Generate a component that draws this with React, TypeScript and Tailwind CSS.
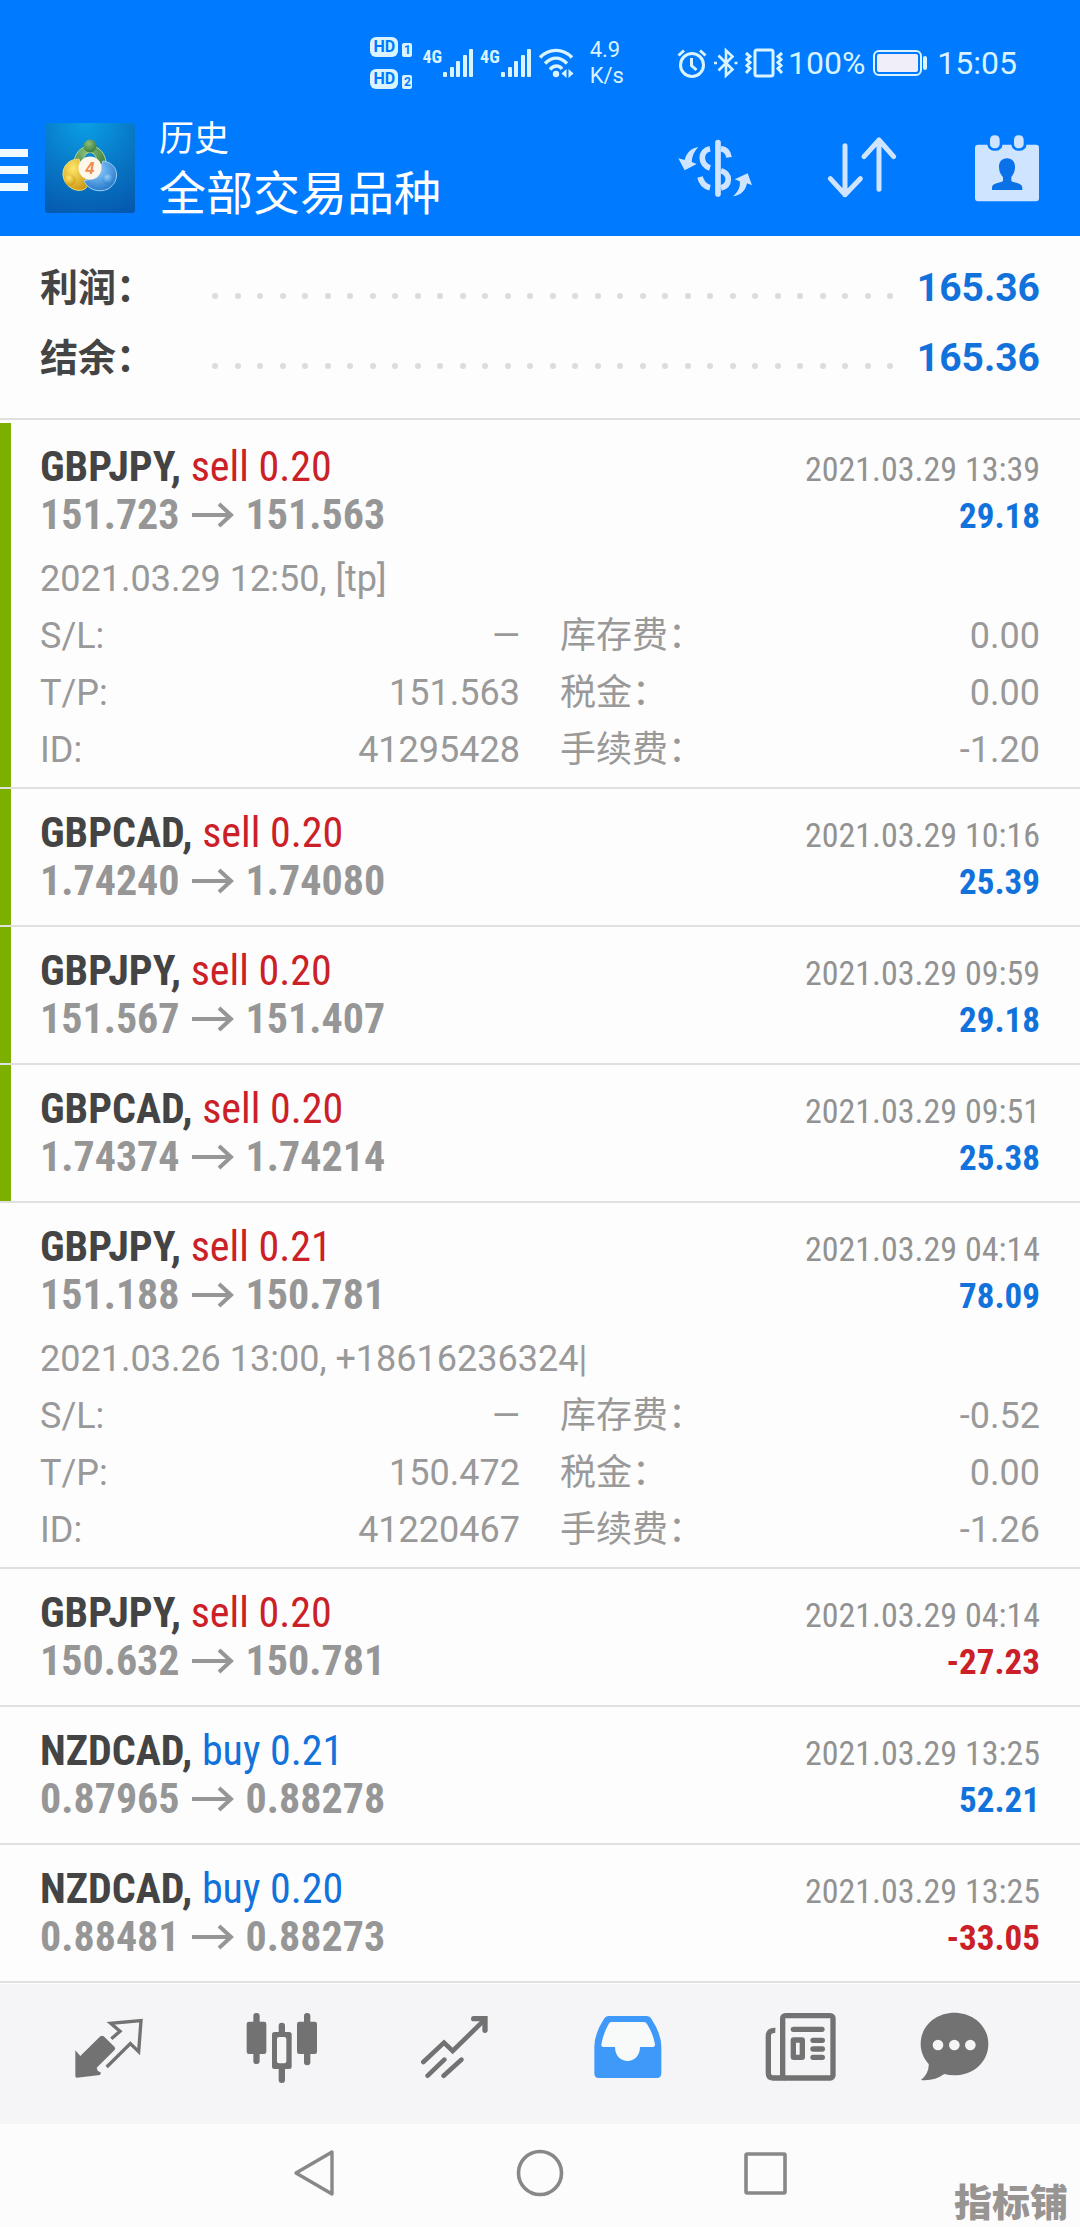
import type { ReactNode } from 'react'

type Trade = {
  symbol: string
  side: 'sell' | 'buy'
  volume: string
  open: string
  close: string
  time: string
  profit: string
  marked?: boolean
  details?: {
    note: string
    rows: [string, string, string, string][]
  }
}

const trades: Trade[] = [
  {
    symbol: 'GBPJPY',
    side: 'sell',
    volume: '0.20',
    open: '151.723',
    close: '151.563',
    time: '2021.03.29 13:39',
    profit: '29.18',
    marked: true,
    details: {
      note: '2021.03.29 12:50, [tp]',
      rows: [
        ['S/L:', '—', '库存费：', '0.00'],
        ['T/P:', '151.563', '税金：', '0.00'],
        ['ID:', '41295428', '手续费：', '-1.20'],
      ],
    },
  },
  {
    symbol: 'GBPCAD',
    side: 'sell',
    volume: '0.20',
    open: '1.74240',
    close: '1.74080',
    time: '2021.03.29 10:16',
    profit: '25.39',
    marked: true,
  },
  {
    symbol: 'GBPJPY',
    side: 'sell',
    volume: '0.20',
    open: '151.567',
    close: '151.407',
    time: '2021.03.29 09:59',
    profit: '29.18',
    marked: true,
  },
  {
    symbol: 'GBPCAD',
    side: 'sell',
    volume: '0.20',
    open: '1.74374',
    close: '1.74214',
    time: '2021.03.29 09:51',
    profit: '25.38',
    marked: true,
  },
  {
    symbol: 'GBPJPY',
    side: 'sell',
    volume: '0.21',
    open: '151.188',
    close: '150.781',
    time: '2021.03.29 04:14',
    profit: '78.09',
    details: {
      note: '2021.03.26 13:00, +18616236324|',
      rows: [
        ['S/L:', '—', '库存费：', '-0.52'],
        ['T/P:', '150.472', '税金：', '0.00'],
        ['ID:', '41220467', '手续费：', '-1.26'],
      ],
    },
  },
  {
    symbol: 'GBPJPY',
    side: 'sell',
    volume: '0.20',
    open: '150.632',
    close: '150.781',
    time: '2021.03.29 04:14',
    profit: '-27.23',
  },
  {
    symbol: 'NZDCAD',
    side: 'buy',
    volume: '0.21',
    open: '0.87965',
    close: '0.88278',
    time: '2021.03.29 13:25',
    profit: '52.21',
  },
  {
    symbol: 'NZDCAD',
    side: 'buy',
    volume: '0.20',
    open: '0.88481',
    close: '0.88273',
    time: '2021.03.29 13:25',
    profit: '-33.05',
  },
]

const HdBadge = ({ sim }: { sim: string }) => (
  <div className="flex items-end gap-1 font-bold text-[#007aff]">
    <span className="flex h-5 w-7 items-center justify-center rounded-md bg-[#d9f3ff] text-base leading-none">
      HD
    </span>
    <span className="flex h-[14px] w-[10px] items-center justify-center rounded-xs bg-[#d9f3ff] text-xs leading-none">
      {sim}
    </span>
  </div>
)

const Signal = () => (
  <div className="flex items-start">
    <span className="font-['Roboto_Condensed','Liberation_Sans_Narrow',sans-serif] text-lg leading-4 font-bold">
      4G
    </span>
    <svg className="h-7 w-8" viewBox="0 0 32 28" fill="currentColor">
      <rect x="1" y="23" width="4" height="5" rx="1" />
      <rect x="8" y="18" width="4" height="10" rx="1" />
      <rect x="14" y="12" width="4" height="16" rx="1" />
      <rect x="21" y="6" width="4" height="22" rx="1" />
      <rect x="27" y="0" width="4" height="28" rx="1" />
    </svg>
  </div>
)

const StatusBar = () => (
  <div className="flex h-[110px] items-center justify-end pt-4 pr-[63px] text-[#d9f3ff]">
    <div className="flex flex-col gap-3">
      <HdBadge sim="1" />
      <HdBadge sim="2" />
    </div>
    <div className="ml-[10px] flex items-center gap-[6px]">
      <Signal />
      <Signal />
      <svg className="h-8 w-9" viewBox="0 0 36 32" fill="none" stroke="currentColor" strokeWidth="3.4">
        <path d="M2 10.500C11 1 25 1 34 10.500M7 16.500C14 9.500 22 9.500 29 16.500M12 22.500C16 18 21 18 24 22" />
        <circle cx="18" cy="27" r="3.200" fill="currentColor" stroke="none" />
        <path d="M28.500 22v9l-5-4.500zM30.500 22v9l5-4.500z" fill="currentColor" stroke="none" />
      </svg>
    </div>
    <div className="ml-4 text-[22px] leading-[26px]">
      <div>4.9</div>
      <div>K/s</div>
    </div>
    <div className="ml-[52px] flex items-center gap-[6px]">
      <svg className="h-8 w-8" viewBox="0 0 32 32" fill="none" stroke="currentColor" strokeWidth="3">
        <circle cx="16" cy="18" r="11.500" />
        <path d="M15.500 11v7.500l5 4.500M2.500 8.500L8 3.500M29.500 8.500L24 3.500" />
      </svg>
      <svg className="h-8 w-6" viewBox="0 0 24 32" fill="none" stroke="currentColor" strokeWidth="2.600">
        <path d="M4.500 8.500L18.500 22.500L12 28.500V3.500L18.500 9.500L4.500 23.500" />
        <path d="M0 16h3M20.500 16h3" />
      </svg>
      <svg className="h-8 w-10" viewBox="0 0 40 32" fill="none" stroke="currentColor">
        <rect x="11" y="3" width="18" height="26" rx="2" strokeWidth="3" />
        <path
          d="M2 6l4 3.500l-3 3l3 3l-3 3l3 3l-4 4.500M38 6l-4 3.500l3 3l-3 3l3 3l-3 3l4 4.500"
          strokeWidth="3"
        />
      </svg>
    </div>
    <div className="ml-1 flex items-center gap-2 text-[32px] leading-9">
      <span>100%</span>
      <svg className="h-7 w-14" viewBox="0 0 56 28">
        <rect x="1" y="2" width="47" height="24" rx="5" fill="none" stroke="currentColor" strokeWidth="2" />
        <rect x="4" y="5" width="41" height="18" rx="2" fill="#f0eff9" />
        <rect x="50" y="7" width="4" height="14" rx="2" fill="currentColor" />
      </svg>
      <span>15:05</span>
    </div>
  </div>
)

const AppLogo = () => (
  <svg className="size-[90px]" viewBox="0 0 90 90" aria-hidden="true">
    <defs>
      <radialGradient id="logo-bg" cx="0.45" cy="0" r="1.1">
        <stop offset="0" stopColor="#0a9fe6" />
        <stop offset="0.5" stopColor="#0878c6" />
        <stop offset="1" stopColor="#0558ae" />
      </radialGradient>
      <radialGradient id="logo-green" cx="0.4" cy="0.3" r="0.8">
        <stop offset="0" stopColor="#8cc07a" />
        <stop offset="1" stopColor="#2f7238" />
      </radialGradient>
      <radialGradient id="logo-gold" cx="0.4" cy="0.3" r="0.8">
        <stop offset="0" stopColor="#ffe76a" />
        <stop offset="1" stopColor="#c9930e" />
      </radialGradient>
      <radialGradient id="logo-blue" cx="0.4" cy="0.3" r="0.8">
        <stop offset="0" stopColor="#8fd0ff" />
        <stop offset="1" stopColor="#1c6fc4" />
      </radialGradient>
    </defs>
    <rect width="90" height="90" rx="3" fill="url(#logo-bg)" />
    <path d="M29 44C27 16 63 16 61 44L52 46C55 24 35 24 38 46z" fill="url(#logo-green)" stroke="#b8d68c" />
    <path d="M34 36C16 36 12 58 28 66C35 69 42 67 43 61L36 44z" fill="url(#logo-gold)" stroke="#f1dc72" />
    <path d="M58 38C74 40 76 58 63 66C54 70 43 67 39 58L52 54z" fill="url(#logo-blue)" stroke="#9fd3f5" />
    <circle cx="45" cy="23" r="6.500" fill="url(#logo-green)" />
    <circle cx="25" cy="57" r="5.500" fill="url(#logo-gold)" />
    <circle cx="63" cy="56" r="5.500" fill="url(#logo-blue)" />
    <circle cx="45" cy="45" r="11.500" fill="#fff6ec" />
    <text
      x="45"
      y="51"
      textAnchor="middle"
      fill="#f08a4b"
      className="font-['Liberation_Sans',sans-serif] text-base font-bold italic"
    >
      4
    </text>
  </svg>
)

const Header = () => (
  <header className="bg-[#007aff] pb-[10px] text-white">
    <StatusBar />
    <div className="flex items-center pr-10">
      <button aria-label="Menu" className="mt-1 flex w-7 flex-col gap-[9px]">
        <span className="h-2 w-full bg-[#f0faff]" />
        <span className="h-2 w-full bg-[#f0faff]" />
        <span className="h-2 w-full bg-[#f0faff]" />
      </button>
      <div className="ml-[17px]">
        <AppLogo />
      </div>
      <div className="ml-6 flex-1 pt-2">
        <div className="text-[35px] leading-[44px]">历史</div>
        <h1 className="text-[47px] leading-[64px]">全部交易品种</h1>
      </div>
      <div className="flex items-center text-[#cfe5ff]">
        <button aria-label="Symbols" className="mr-[73px]">
          <svg className="h-[60px] w-[76px]" viewBox="108 80 228 180" fill="none" stroke="currentColor">
            <path
              d="M207 112C176 118 176 160 207 170M177 197C181 214 190 225 207 229M240 112C254 114 262 123 264 138M240 178C270 188 268 222 240 230"
              strokeWidth="17"
            />
            <path d="M231 94V248" strokeWidth="17" strokeLinecap="round" />
            <path
              d="M172 107C150 111 136 125 131 146L112 141L131 177L167 158L152 152C153 134 160 120 172 107zM276 255C292 241 299 226 296 210L281 204L320 186L333 222L318 216C314 238 300 252 276 255z"
              fill="currentColor"
              stroke="none"
            />
          </svg>
        </button>
        <button aria-label="Sort" className="mr-[76px]">
          <svg
            className="h-16 w-[72px]"
            viewBox="554 80 216 192"
            fill="none"
            stroke="currentColor"
            strokeWidth="15"
            strokeLinecap="round"
            strokeLinejoin="round"
          >
            <path d="M611 109V256M567 208L611 256L657 208M713 240V92M668 142L713 92L757 142" />
          </svg>
        </button>
        <button aria-label="Period">
          <svg className="h-[68px] w-[66px]" viewBox="1002 70 198 204">
            <rect x="1005" y="102" width="192" height="170" rx="9" fill="currentColor" />
            <rect x="1042" y="66" width="46" height="54" rx="20" fill="#007aff" />
            <rect x="1114" y="66" width="46" height="54" rx="20" fill="#007aff" />
            <rect x="1050" y="74" width="29" height="39" rx="13" fill="currentColor" />
            <rect x="1122" y="74" width="29" height="39" rx="13" fill="currentColor" />
            <path
              d="M1101 143C1118 143 1126 155 1125 172C1124 186 1118 194 1114 199V211C1122 217 1147 216 1147 231V238H1056V231C1056 216 1081 217 1089 211V199C1084 194 1078 186 1077 172C1076 155 1084 143 1101 143z"
              fill="#0a72e8"
            />
          </svg>
        </button>
      </div>
    </div>
  </header>
)

const SummaryRow = ({ label, value }: { label: string; value: string }) => (
  <div className="flex h-[70px] items-center font-bold">
    <dt className="w-[172px] text-[38px] text-[#444]">{label}</dt>
    <dd className="flex flex-1 items-center text-[39px]">
      <span className="mt-4 flex flex-1 justify-between" aria-hidden="true">
        {Array.from({ length: 31 }, (_, i) => (
          <span key={i} className="size-[6px] rounded-full bg-[#dcdcdc]" />
        ))}
      </span>
      <span className="ml-[23px] text-[#1272dc]">{value}</span>
    </dd>
  </div>
)

const TradeItem = ({ trade }: { trade: Trade }) => {
  const { symbol, side, volume, open, close, time, profit, marked, details } = trade

  return (
    <li className="border-b-2 border-[#e0e0e0]">
      <div className={`border-l-[11px] pt-5 pr-10 pl-[29px] ${marked ? 'border-[#7bb000]' : 'border-transparent'}`}>
        <div className="flex justify-between pb-[17px] font-['Roboto_Condensed','Liberation_Sans_Narrow',sans-serif]">
          <div className="pb-[3px] text-[42px] leading-[48px]">
            <div className={side === 'sell' ? 'text-[#cb2027]' : 'text-[#1272dc]'}>
              <span className="font-bold text-[#444]">{symbol},</span> {side} {volume}
            </div>
            <div className="flex items-center font-bold text-[#969696]">
              {open}
              <svg className="mx-3 h-8 w-[42px]" viewBox="0 0 42 32" fill="none" stroke="currentColor" strokeWidth="4">
                <path d="M0 16H40M27 5L39 16L27 27" />
              </svg>
              {close}
            </div>
          </div>
          <div className="pt-[2px] text-right text-[34px] leading-[48px]">
            <div className="text-[#929292]">{time}</div>
            <div
              className={`text-[35px] font-bold ${profit.startsWith('-') ? 'text-[#cb2027]' : 'text-[#1272dc]'}`}
            >
              {profit}
            </div>
          </div>
        </div>

        {details && (
          <div className="-mt-2 pb-2 text-4xl leading-[57px] text-[#999]">
            <p>{details.note}</p>
            <table className="w-full table-fixed">
              <tbody>
                {details.rows.map(([label, value, feeLabel, fee]) => (
                  <tr key={label}>
                    <th className="w-[12%] text-left font-normal">{label}</th>
                    <td className="w-[36%] text-right">{value}</td>
                    <th className="w-[24%] pl-10 text-left font-normal">{feeLabel}</th>
                    <td className="text-right">{fee}</td>
                  </tr>
                ))}
              </tbody>
            </table>
          </div>
        )}
      </div>
    </li>
  )
}

const TabButton = ({ label, active, children }: { label: string; active?: boolean; children: ReactNode }) => (
  <button aria-label={label} className={`flex justify-center ${active ? 'text-[#3f99f9]' : 'text-[#727272]'}`}>
    {children}
  </button>
)

const TabBar = () => (
  <nav className="grid grid-cols-[173fr_173fr_173fr_173fr_173fr_135fr] bg-[#f5f5f7] pt-7 pr-[58px] pb-10 pl-[22px]">
    <TabButton label="Quotes">
      <svg className="size-[72px]" viewBox="99 126 216 216">
        <path
          d="M106 241L121 258L181 199Q186 195 191 199L224 231Q228 236 223 241L170 293L173 302L183 308L180 315L110 323Q106 323 106 318z"
          fill="currentColor"
        />
        <path
          d="M214 206L240 184L212 160L303 152L296 245L271 221L200 291"
          fill="none"
          stroke="currentColor"
          strokeWidth="10"
        />
      </svg>
    </TabButton>
    <TabButton label="Charts">
      <svg className="size-[72px]" viewBox="615 126 216 216" fill="currentColor">
        <rect x="617" y="155" width="59" height="97" rx="7" />
        <rect x="637" y="129" width="19" height="153" rx="9" />
        <rect x="768" y="155" width="60" height="97" rx="7" />
        <rect x="789" y="129" width="19" height="157" rx="9" />
        <rect x="713" y="158" width="19" height="181" rx="9" />
        <rect x="693" y="186" width="59" height="111" rx="7" />
        <rect x="708" y="201" width="28" height="79" rx="6" fill="#f5f5f7" />
      </svg>
    </TabButton>
    <TabButton label="Trade">
      <svg
        className="size-[72px]"
        viewBox="1134 126 216 216"
        fill="none"
        stroke="currentColor"
        strokeWidth="14"
        strokeLinecap="round"
      >
        <path d="M1147 276L1209 218L1235 243L1328 152M1160 317L1210 269M1208 317L1261 269" />
        <path d="M1298 146H1332V181" strokeWidth="16" />
      </svg>
    </TabButton>
    <TabButton label="History" active>
      <svg className="size-[72px]" viewBox="153 126 216 216">
        <path
          d="M202 138H318Q326 138 331 146Q361 192 361 230V310Q361 324 348 324H173Q160 324 160 310V230Q160 192 189 146Q194 138 202 138z"
          fill="currentColor"
        />
        <path
          d="M211 156H308Q315 156 318 162Q336 190 342 223Q342 231 335 231H297C297 287 222 287 222 231H187Q180 231 181 223Q187 190 203 162Q205 156 211 156z"
          fill="#f8faf9"
        />
      </svg>
    </TabButton>
    <TabButton label="News">
      <svg
        className="size-[72px]"
        viewBox="675 126 216 216"
        fill="none"
        stroke="currentColor"
        strokeWidth="16"
        strokeLinecap="round"
      >
        <rect x="728" y="137" width="151" height="187" rx="8" />
        <path d="M706 181Q685 180 685 198V310Q685 324 699 324H735" strokeLinecap="butt" />
        <path d="M760 178H846M819 211H847M819 237H847M819 262H847" />
        <rect x="760" y="210" width="27" height="52" rx="1" />
      </svg>
    </TabButton>
    <TabButton label="Chat">
      <svg className="size-[72px]" viewBox="1137 126 216 216">
        <path
          d="M1243 128C1300 128 1345 168 1345 222C1345 276 1300 316 1243 316Q1226 316 1213 312Q1182 334 1143 330Q1168 310 1166 282C1152 266 1142 246 1142 222C1142 168 1187 128 1243 128z"
          fill="currentColor"
        />
        <g fill="#f5f5f7">
          <circle cx="1194" cy="225" r="16" />
          <circle cx="1243" cy="225" r="16" />
          <circle cx="1291" cy="225" r="16" />
        </g>
      </svg>
    </TabButton>
  </nav>
)

const SystemNav = () => (
  <div className="relative flex h-[103px] items-center justify-center gap-[177px] bg-[#fcfcfc] pb-[6px] text-[#888]">
    <button aria-label="Back">
      <svg
        className="size-12"
        viewBox="0 0 48 48"
        fill="none"
        stroke="currentColor"
        strokeWidth="3.400"
        strokeLinejoin="round"
      >
        <path d="M41 3V45L5 24z" />
      </svg>
    </button>
    <button aria-label="Home">
      <svg className="size-12" viewBox="0 0 48 48" fill="none" stroke="currentColor" strokeWidth="3.600">
        <circle cx="24" cy="24" r="21.500" />
      </svg>
    </button>
    <button aria-label="Recents">
      <svg className="size-12" viewBox="0 0 48 48" fill="none" stroke="currentColor" strokeWidth="3.600">
        <rect x="5" y="5" width="39" height="39" rx="1" />
      </svg>
    </button>
    <span className="absolute right-3 bottom-1 text-[38px] leading-10 font-black text-[#989492]">指标铺</span>
  </div>
)

const App = () => {
  return (
    <div className="flex min-h-screen flex-col bg-[#fdfdfd] font-[Roboto,'Noto_Sans_CJK_SC',sans-serif]">
      <Header />
      <main className="flex-1">
        <dl className="border-b-2 border-[#e0e0e0] pt-[17px] pr-10 pb-[25px] pl-10">
          <SummaryRow label="利润：" value="165.36" />
          <SummaryRow label="结余：" value="165.36" />
        </dl>
        <ul className="pt-[3px]">
          {trades.map((trade, i) => (
            <TradeItem key={i} trade={trade} />
          ))}
        </ul>
      </main>
      <TabBar />
      <SystemNav />
    </div>
  )
}

export default App
